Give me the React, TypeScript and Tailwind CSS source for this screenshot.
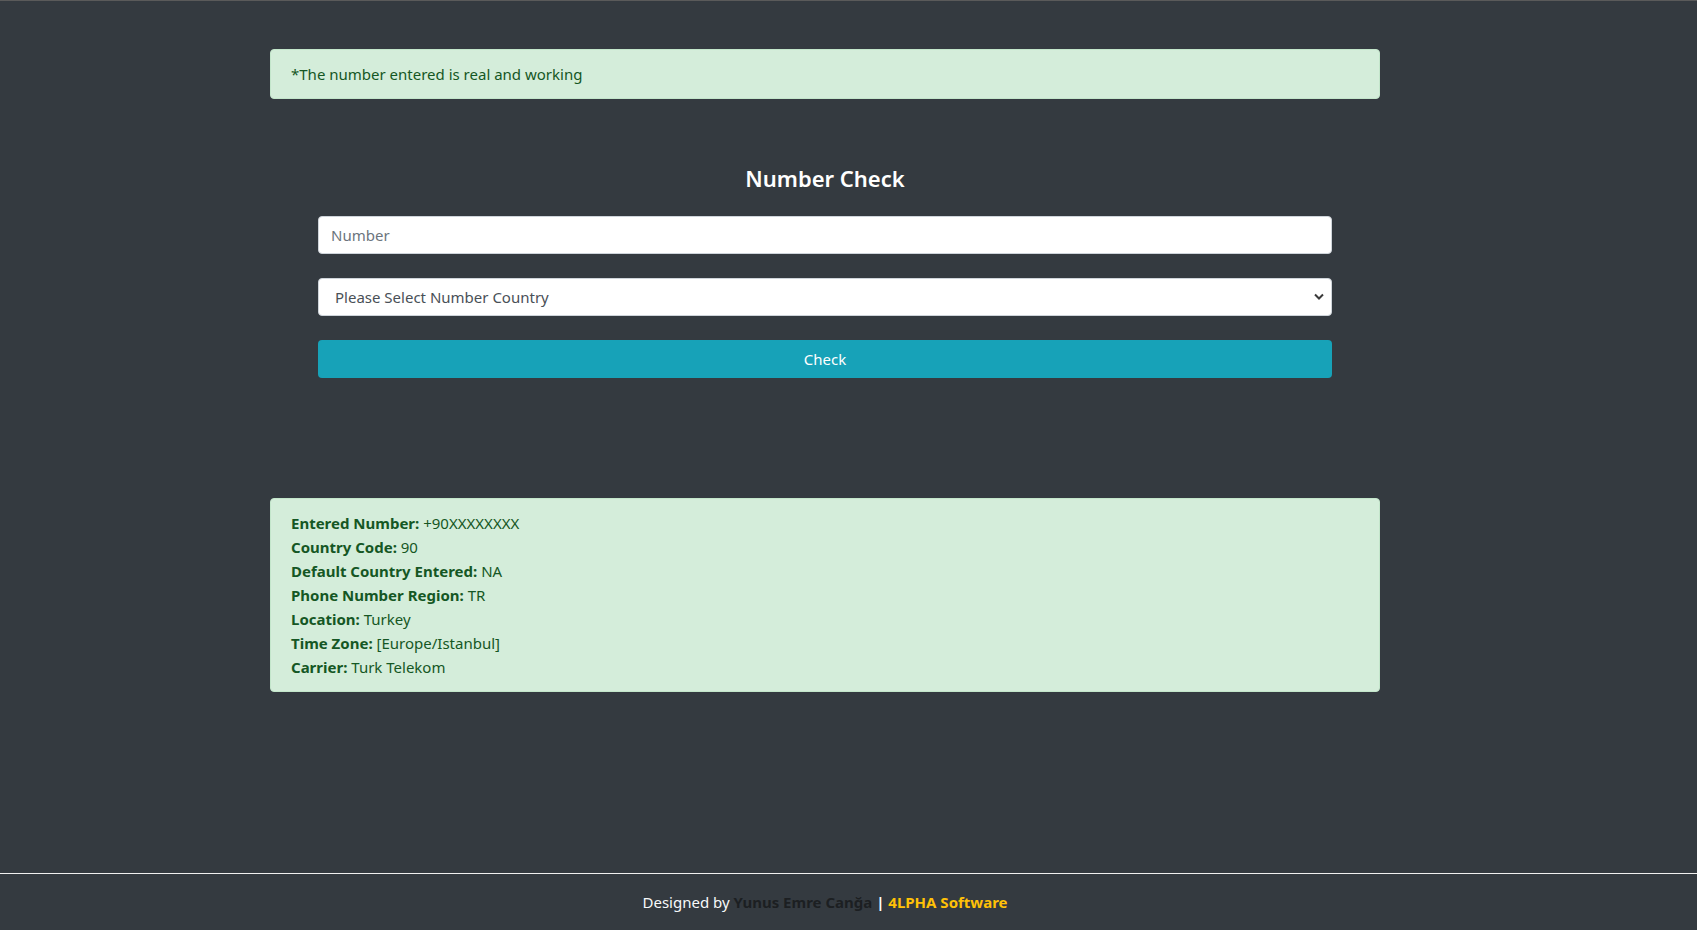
import React from "react";

export default function App() {
  const rows: [string, string][] = [
    ["Entered Number:", "+90XXXXXXXX"],
    ["Country Code:", "90"],
    ["Default Country Entered:", "NA"],
    ["Phone Number Region:", "TR"],
    ["Location:", "Turkey"],
    ["Time Zone:", "[Europe/Istanbul]"],
    ["Carrier:", "Turk Telekom"],
  ];
  return (
    <div
      className="min-h-[930px] bg-[#343a40] border-t border-[#5a5a5a] flex flex-col text-[15px]"
      style={{ fontFamily: '"Noto Sans", "Open Sans", sans-serif' }}
    >
      <div className="w-[1650px]">
        <div className="w-[1110px] mx-auto pt-[48px]">
          <div className="h-[50px] rounded-[4px] border border-[#c3e6cb] bg-[#d4edda] text-[#155724] px-[20px] flex items-center leading-[24px]">
            *The number entered is real and working
          </div>

          <h4 className="mt-[65px] h-[29px] leading-[29px] text-center text-[22px] font-semibold text-white">
            Number Check
          </h4>

          <div className="w-[1014px] mx-auto mt-[23px] flex flex-col gap-[24px]">
            <input
              className="h-[38px] w-full rounded-[4px] border border-[#ced4da] bg-white px-[12px] text-[#495057] placeholder:text-[#6c757d] outline-none"
              placeholder="Number"
            />
            <div className="relative h-[38px]">
              <select className="h-[38px] w-full appearance-none rounded-[4px] border border-[#ced4da] bg-white pl-[16px] pr-[30px] text-[#495057] outline-none">
                <option>Please Select Number Country</option>
              </select>
              <svg
                className="pointer-events-none absolute right-[8px] top-[15px]"
                width="10"
                height="8"
                viewBox="0 0 10 8"
              >
                <path d="M1 1.5 L5 5.5 L9 1.5" fill="none" stroke="#3a3a3a" strokeWidth="2" />
              </svg>
            </div>
            <button className="h-[38px] w-full rounded-[4px] bg-[#17a2b8] text-white leading-[24px]">
              Check
            </button>
          </div>

          <div className="mt-[120px] rounded-[4px] border border-[#c3e6cb] bg-[#d4edda] text-[#155724] px-[20px] py-[12px] leading-[24px]">
            {rows.map(([k, v]) => (
              <div key={k}>
                <b className="font-bold">{k}</b> {v}
              </div>
            ))}
          </div>
        </div>
      </div>

      <footer className="mt-auto h-[57px] border-t border-[#f0f0f0] w-full">
        <div className="w-[1650px] flex justify-center pt-[16px] leading-[24px] text-[#f8f9fa]">
          <span>
            Designed by <b className="font-bold text-[#1c1f22]">Yunus Emre Canğa</b>{" "}
            <b className="font-bold text-white">|</b>{" "}
            <b className="font-bold text-[#ffc107]">4LPHA Software</b>
          </span>
        </div>
      </footer>
    </div>
  );
}
